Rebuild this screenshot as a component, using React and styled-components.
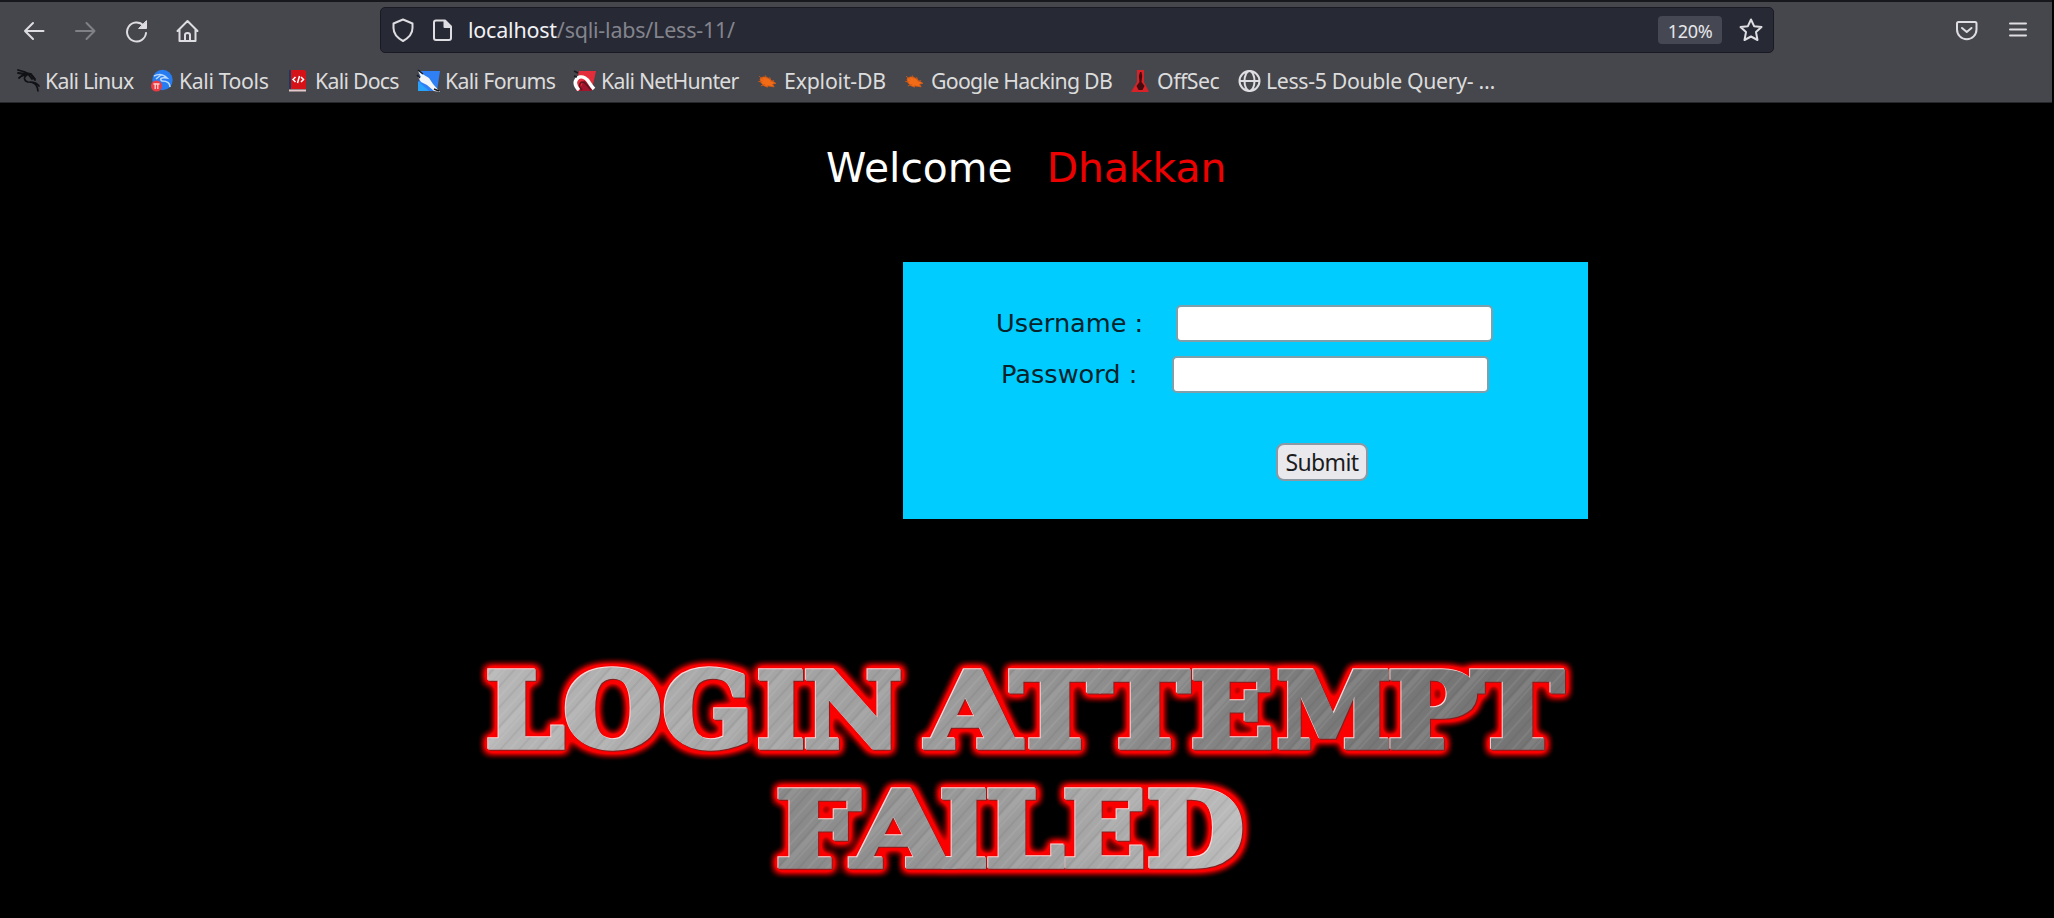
import React from "react";
import styled, { createGlobalStyle } from "styled-components";

const GlobalStyle = createGlobalStyle`
  html, body { margin: 0; background: #000; overflow: hidden; }
  * { box-sizing: border-box; }
`;
const ui = `"Noto Sans", "Open Sans", sans-serif`;

const Screen = styled.div`
  width: 2054px;
  height: 918px;
  background: #000;
`;
const Chrome = styled.header`
  width: 2052px;
  height: 103px;
  background: #46474c;
  border-top: 2px solid #17181d;
  border-bottom: 1px solid #26272b;
  font-family: ${ui};
`;
const Toolbar = styled.div`
  height: 57px;
  padding: 5px 22px 0 22px;
  display: flex;
  align-items: flex-start;
`;
const NavButtons = styled.nav`
  display: flex;
  gap: 27px;
  width: 358px;
  padding-top: 12px;
`;
const Icon = styled.svg`
  display: block;
  flex: none;
  width: 24px;
  height: 24px;
  fill: none;
  stroke: ${(p) => p.$color || "#dedee2"};
  stroke-width: 2;
  stroke-linecap: round;
  stroke-linejoin: round;
`;
const AddressBar = styled.div`
  width: 1394px;
  height: 46px;
  border: 1px solid #191a23;
  border-radius: 5px;
  background: #272935;
  display: flex;
  align-items: center;
  padding: 0 10px 0 10px;
`;
const PageIconSlot = styled.span`
  margin: 0 14px 0 15px;
`;
const Address = styled.div`
  flex: 1;
  font-size: 21.5px;
  line-height: 28px;
  letter-spacing: -0.22px;
  color: #83848c;
  white-space: nowrap;
`;
const Host = styled.span`
  color: #f1f1f4;
`;
const ZoomBadge = styled.span`
  width: 64px;
  height: 28px;
  margin-right: 17px;
  border-radius: 4px;
  background: #454852;
  color: #e6e6ea;
  font-size: 18px;
  line-height: 31px;
  letter-spacing: -0.3px;
  text-align: center;
`;
const MenuButtons = styled.div`
  display: flex;
  gap: 28px;
  margin-left: auto;
  padding-top: 11px;
`;
const Bookmarks = styled.div`
  display: flex;
  height: 43px;
  padding-left: 16px;
`;
const Bookmark = styled.div`
  width: ${(p) => p.$width}px;
  flex: none;
  display: flex;
  align-items: center;
  gap: 5px;
  color: #dcdcdc;
  font-size: 21.3px;
  line-height: 43px;
  letter-spacing: ${(p) => p.$track}px;
  white-space: nowrap;
`;
const Favicon = styled.svg`
  width: 24px;
  height: 24px;
  flex: none;
  display: block;
`;

const Page = styled.main`
  height: 815px;
  display: flex;
  flex-direction: column;
  font-family: "DejaVu Sans", sans-serif;
`;
const Welcome = styled.h1`
  margin: 0;
  height: 159px;
  padding: 41px 0 0 826px;
  display: flex;
  gap: 34px;
  font-size: 40.8px;
  font-weight: 400;
  line-height: 48px;
  color: #fff;
`;
const Name = styled.span`
  color: #ec0000;
`;
const LoginBox = styled.form`
  width: 685px;
  height: 257px;
  margin: 0 0 0 903px;
  padding-top: 43px;
  background: #00ccff;
`;
const Field = styled.label`
  display: flex;
  align-items: center;
  height: 37px;
  margin: 0 0 14px ${(p) => p.$indent}px;
  font-size: 25.6px;
  color: #06232b;
`;
const Caption = styled.span`
  width: ${(p) => p.$width}px;
  padding-bottom: 2px;
  white-space: pre;
`;
const TextInput = styled.input`
  width: 317px;
  height: 37px;
  border: 2px solid #7f9fab;
  border-radius: 5px;
  background: #fff;
  padding: 0 6px;
`;
const Submit = styled.button`
  display: block;
  width: 92px;
  height: 38px;
  margin: 50px 0 0 373px;
  padding: 0;
  border: 2px solid #8c98a4;
  border-radius: 8px;
  background: #e9e9ed;
  color: #1c1c20;
  font: 23px/34px ${ui};
  letter-spacing: -0.6px;
`;
const Banner = styled.svg`
  display: block;
  width: 1130px;
  height: 270px;
  margin: 111px 0 0 460px;
`;

const Paw = () => (
  <g transform="translate(1.500 2) scale(.88)" fill="#f26c17" stroke="#d95a12" strokeWidth="1">
    <path d="M4 9 C8 5 13 7 17 11 L22 14 L18 15 L20 18 L14 17 C9 19 7 15 5 13 Z" />
    <path d="M3 6l5 4M10 5l2 4M2 12l5 0M5 17l5-2M12 19l1-3M15 7l1 4M20 11l-4 1" />
  </g>
);

const favicons = {
  linux: (
    <g fill="none" stroke="#101114" strokeLinecap="round">
      <path d="M2 1l7 2 5 3M2 4l8 1M3 9l5-4M6 7l6-2 4 5M11 4l4 1 4 5M16 7l3 4" strokeWidth="1.8" />
      <path d="M11 6C7 8 8 12 12 13c5 0 9 1 10 9M14 13c4 0 7 1 9 4" strokeWidth="1.7" />
    </g>
  ),
  tools: (
    <g>
      <circle cx="12.500" cy="11" r="10.200" fill="#267cf0" />
      <path d="M4 7c6-3 10-1 13 2-6-1-8 1-5 3 4 0 8 1 8 6M6 10l5-4" fill="none" stroke="#b9d9ff" strokeWidth="1.6" />
      <circle cx="6.500" cy="17" r="5.500" fill="#ec3a43" />
      <path d="M3.500 15h6M5.200 15v5M7.800 15v5" stroke="#ffd2d2" strokeWidth="1.300" />
    </g>
  ),
  docs: (
    <g>
      <path d="M3 1h3v19H3z" fill="#20365e" />
      <path d="M5 1h13q2 0 2 2v17H5z" fill="#d51218" />
      <path d="M3 20.500h17v2H3z" fill="#e7c8cb" />
      <path d="M9.500 8L7 10.500l2.500 2.500M15 8l2.500 2.500L15 13M13.500 7l-2 7" fill="none" stroke="#fff" strokeWidth="1.500" />
    </g>
  ),
  forums: (
    <g>
      <path d="M4 2h20l-3 20H2z" fill="#2f7ff5" />
      <path d="M2 12l11 10H2z" fill="#29a2fa" />
      <path d="M2 2l6 4 5 3 4 6 7 8-6-1-7-6-6-3-3-5 3 0z" fill="#f4f5f6" />
      <path d="M2 1l5 4M1 6l3 3M18 20l5 2" stroke="#17191d" strokeWidth="1.500" />
    </g>
  ),
  nethunter: (
    <g>
      <path d="M7 2h17l-4 18-4 2H4z" fill="#e32d3a" />
      <path d="M12 11l10 8-3 3H7z" fill="#a3152c" />
      <path d="M7 21C-1 13 6 5 13 9c4 2 4 6 9 11" fill="none" stroke="#fff" strokeWidth="3.600" />
      <path d="M10 21c-5-5-1-10 3-7l6 7" fill="none" stroke="#631422" strokeWidth="1.600" />
      <path d="M2 2l4 2M2 7l3 1" stroke="#17191d" strokeWidth="1.500" />
    </g>
  ),
  exploit: <Paw />,
  google: <Paw />,
  offsec: (
    <g>
      <path d="M9 1h7v12l5 10H3l6-10z" fill="#d92128" />
      <path d="M12 3h1.500l.7 4-.7 6 3 4-2 4h-4l-2-4 3-4-.6-6z" fill="#430b0d" />
    </g>
  ),
  globe: (
    <g fill="none" stroke="#dedee2" strokeWidth="2">
      <circle cx="12.500" cy="12" r="10" />
      <ellipse cx="12.500" cy="12" rx="5" ry="10" />
      <path d="M2.500 12h20" />
    </g>
  ),
};

const bookmarks = [
  ["linux", "Kali Linux", 134, -0.75],
  ["tools", "Kali Tools", 136, -0.4],
  ["docs", "Kali Docs", 130, -0.75],
  ["forums", "Kali Forums", 156, -0.67],
  ["nethunter", "Kali NetHunter", 183, -0.75],
  ["exploit", "Exploit-DB", 147, -0.2],
  ["google", "Google Hacking DB", 226, -0.73],
  ["offsec", "OffSec", 109, -0.5],
  ["globe", "Less-5 Double Query- …", 260, -0.35],
];

// Each letter: character, left edge, advance width.
const lineOne = [
  ["L", 26, 78], ["O", 104, 98], ["G", 203, 90], ["I", 297, 48], ["N", 344, 98],
  [" ", 443, 20], ["A", 467, 93], ["T", 551, 88], ["T", 641, 88], ["E", 731, 83],
  ["M", 817, 114], ["P", 928, 89], ["T", 1012, 91],
];
const lineTwo = [
  ["F", 316, 84], ["A", 393, 98], ["I", 480, 48], ["L", 526, 78], ["E", 603, 83], ["D", 687, 97],
];

const MetalLine = ({ letters, baseline, fill }) => (
  <text
    y={baseline}
    fill={fill}
    stroke={fill}
    strokeWidth="5.500"
    fontFamily="DejaVu Serif, serif"
    fontWeight="700"
    fontSize="103.500"
    filter="url(#glow)"
  >
    {letters.map(([char, x, width], i) => (
      <tspan key={i} x={x} textLength={width} lengthAdjust="spacingAndGlyphs">{char}</tspan>
    ))}
  </text>
);

export default function App() {
  return (
    <Screen>
      <GlobalStyle />
      <Chrome>
        <Toolbar>
          <NavButtons>
            <Icon viewBox="0 0 24 24"><path d="M21.5 12H3M11 4l-8 8 8 8" /></Icon>
            <Icon viewBox="0 0 24 24" $color="#808186"><path d="M3 12h18.500M13.500 4l8 8-8 8" /></Icon>
            <Icon viewBox="0 0 24 24"><path d="M19.500 6.500A9.500 9.500 0 1 0 22 14" /><path d="M22.500 2v7.500h-7.500z" fill="#dedee2" strokeWidth="1" /></Icon>
            <Icon viewBox="0 0 24 24"><path d="M2.500 12L12.500 2l10 10M4.500 10.500V22h16V10.500M10 22v-6q0-2 2.500-2t2.500 2v6" /></Icon>
          </NavButtons>
          <AddressBar>
            <Icon viewBox="0 0 24 24"><path d="M12 1.500l9.500 4V10c0 6-4 10-9.500 13C6.500 20 2.500 16 2.500 10V5.500z" /></Icon>
            <PageIconSlot>
              <Icon viewBox="0 0 24 24"><path d="M6 2.500h9l6 6V20q0 2-2 2H6q-2 0-2-2V4.500q0-2 2-2z" /><path d="M14.500 3.500v5.500h5.500z" fill="#dedee2" /></Icon>
            </PageIconSlot>
            <Address><Host>localhost</Host>/sqli-labs/Less-11/</Address>
            <ZoomBadge>120%</ZoomBadge>
            <Icon viewBox="0 0 24 24"><path d="M12 1.500l3.100 6.700 7.400.9-5.500 5 1.500 7.900L12 18.500 5.500 22 7 14.100l-5.500-5 7.400-.9z" /></Icon>
          </AddressBar>
          <MenuButtons>
            <Icon viewBox="0 0 24 24"><path d="M4.500 4h16.500q1.500 0 1.500 1.500V11.500a9.750 9.750 0 0 1-19.500 0V5.500Q3 4 4.500 4zM8 10l4.750 4 4.750-4" /></Icon>
            <Icon viewBox="0 0 24 24"><path d="M4 5.500h16M4 11.500h16M4 17.500h16" /></Icon>
          </MenuButtons>
        </Toolbar>
        <Bookmarks>
          {bookmarks.map(([icon, label, width, track]) => (
            <Bookmark key={label} $width={width} $track={track}>
              <Favicon viewBox="0 0 24 24">{favicons[icon]}</Favicon>
              {label}
            </Bookmark>
          ))}
        </Bookmarks>
      </Chrome>
      <Page>
        <Welcome><span>Welcome</span><Name>Dhakkan</Name></Welcome>
        <LoginBox onSubmit={(e) => e.preventDefault()}>
          <Field $indent={93}><Caption $width={180}>Username :</Caption><TextInput name="uname" /></Field>
          <Field $indent={98}><Caption $width={171}>Password :</Caption><TextInput name="passwd" /></Field>
          <Submit>Submit</Submit>
        </LoginBox>
        <Banner viewBox="0 0 1130 270">
          <defs>
            <linearGradient id="steelOne">
              <stop offset="0" stopColor="#b8b8b8" /><stop offset=".45" stopColor="#9a9a9a" />
              <stop offset=".78" stopColor="#787878" /><stop offset="1" stopColor="#747474" />
            </linearGradient>
            <linearGradient id="steelTwo">
              <stop offset=".28" stopColor="#888" /><stop offset=".5" stopColor="#9e9e9e" />
              <stop offset=".7" stopColor="#bdbdbd" />
            </linearGradient>
            <pattern id="streaks" width="43" height="400" patternUnits="userSpaceOnUse" patternTransform="rotate(42)">
              <path d="M2 0V400M17 0V400M31 0V400" stroke="#fff" strokeOpacity=".14" strokeWidth="1" />
              <path d="M8 0V400M24 0V400M38 0V400" stroke="#222" strokeOpacity=".09" strokeWidth="1.500" />
              <path d="M12 0V400" stroke="#fff" strokeOpacity=".08" strokeWidth="5" />
            </pattern>
            {["One", "Two"].map((n) => (
              <pattern key={n} id={"metal" + n} width="1130" height="270" patternUnits="userSpaceOnUse">
                <rect width="1130" height="270" fill={`url(#steel${n})`} />
                <rect width="1130" height="270" fill="url(#streaks)" />
              </pattern>
            ))}
            <filter id="glow" x="0" y="0" width="1130" height="270" filterUnits="userSpaceOnUse" colorInterpolationFilters="sRGB">
              <feMorphology in="SourceAlpha" operator="dilate" radius="3" result="wide" />
              <feGaussianBlur in="wide" stdDeviation="4" result="soft" />
              <feColorMatrix in="soft" values="0 0 0 0 .98  0 0 0 0 0  0 0 0 0 0  0 0 0 2.200 -0.080" result="red" />
              <feOffset in="SourceAlpha" dx="-1" dy="-1.200" result="up" />
              <feFlood floodColor="#fff" floodOpacity=".85" />
              <feComposite in2="up" operator="in" result="light" />
              <feOffset in="SourceAlpha" dx="1" dy="1" result="down" />
              <feFlood floodColor="#812020" />
              <feComposite in2="down" operator="in" result="shade" />
              <feMerge>
                <feMergeNode in="red" /><feMergeNode in="shade" /><feMergeNode in="light" /><feMergeNode in="SourceGraphic" />
              </feMerge>
            </filter>
          </defs>
          <MetalLine letters={lineOne} baseline={116.5} fill="url(#metalOne)" />
          <MetalLine letters={lineTwo} baseline={235.5} fill="url(#metalTwo)" />
        </Banner>
      </Page>
    </Screen>
  );
}
